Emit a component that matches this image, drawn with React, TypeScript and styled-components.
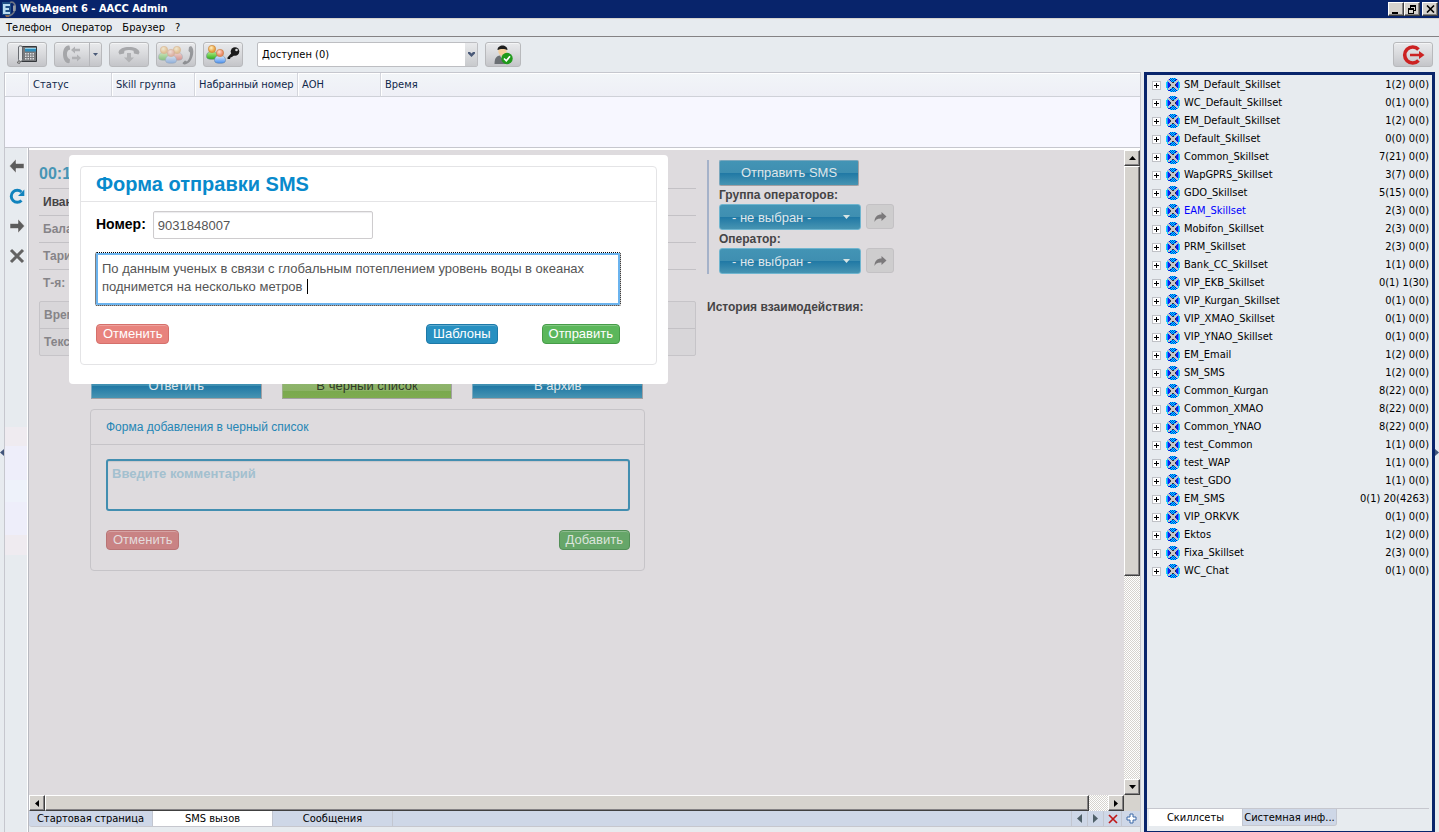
import React from 'react';
import styled, { createGlobalStyle, css } from 'styled-components';

const uiFont = `"DejaVu Sans Condensed", "DejaVu Sans", sans-serif`;
const webFont = `"Liberation Sans", Arial, sans-serif`;

const GlobalStyle = createGlobalStyle`
  *, *::before, *::after { box-sizing: border-box; }
  body { margin: 0; background: #e7ebef; font-family: ${uiFont}; font-size: 11px; color: #000; }
  button, input, select, textarea { font: inherit; margin: 0; }
  button { padding: 0; cursor: pointer; }
  ul, h1, h2, dl, dd { margin: 0; padding: 0; list-style: none; }
  svg { display: block; flex: none; }
`;

const Page = styled.div`
  min-height: 100vh;
  display: flex;
  flex-direction: column;
`;

/* ---- window chrome ---- */

const TitleBar = styled.header`
  display: flex;
  align-items: center;
  height: 18px;
  padding: 0 1px 0 2px;
  gap: 4px;
  background: #08246b;
  color: #fff;
`;

const Title = styled.h1`
  flex: 1;
  font-family: ${uiFont};
  font-size: 11px;
  font-weight: bold;
  line-height: 18px;
`;

const WindowButtons = styled.div`
  display: flex;
`;

const WindowButton = styled.button<{ $gap?: boolean }>`
  display: grid;
  place-items: center;
  width: 16px;
  height: 14px;
  margin-left: ${p => (p.$gap ? 2 : 0)}px;
  background: #d6d3ce;
  border: 1px solid;
  border-color: #fff #404040 #404040 #fff;
  box-shadow: inset -1px -1px 0 #848284;
`;

const MenuBar = styled.nav`
  display: flex;
  align-items: center;
  height: 19px;
  padding: 0 6px;
  gap: 10px;
  border-top: 1px solid #d6d3ce;
  border-bottom: 1px solid #848284;
`;

const MenuButton = styled.button`
  border: 0;
  background: none;
  line-height: 16px;
`;

const Toolbar = styled.div`
  display: flex;
  align-items: center;
  height: 35px;
  padding: 0 6px 0 7px;
  gap: 7px;
`;

const ToolButton = styled.button<{ $width?: number }>`
  display: flex;
  align-items: center;
  justify-content: center;
  width: ${p => p.$width ?? 40}px;
  height: 25px;
  border: 1px solid #b8b9bc;
  border-radius: 3px;
  background: linear-gradient(#e9eaec, #d8d9dc 50%, #c4c5c9);
  box-shadow: inset 0 1px 0 #f4f5f6;
`;

const SplitArrow = styled.span`
  display: grid;
  place-items: center;
  width: 12px;
  height: 23px;
  border-left: 1px solid #b5b6ba;
`;

const SplitMain = styled.span`
  display: grid;
  place-items: center;
  flex: 1;
`;

const StatusBox = styled.div`
  display: flex;
  width: 221px;
  height: 25px;
  margin-left: 7px;
  border: 1px solid #bdbec2;
  border-radius: 2px;
  background: #fff;
  position: relative;
`;

const StatusSelect = styled.select`
  appearance: none;
  flex: 1;
  padding: 0 16px 0 4px;
  border: 0;
  background: none;
`;

const StatusArrow = styled.span`
  position: absolute;
  right: 0;
  top: 0;
  bottom: 0;
  width: 12px;
  display: grid;
  place-items: center;
  background: linear-gradient(#e9eaec, #c8cacd);
  pointer-events: none;
`;

const Spacer = styled.span`
  flex: 1;
`;

/* ---- main frame ---- */

const Main = styled.main`
  flex: 1;
  display: flex;
`;

const Gutter = styled.div`
  display: flex;
  align-items: center;
  width: 4px;
`;

const Work = styled.div`
  flex: 1;
  min-width: 0;
  display: flex;
  flex-direction: column;
  border: solid #c6c7ce;
  border-width: 1px 1px 0 1px;
`;

const CallArea = styled.section`
  height: 75px;
  background: #f7f7ff;
  border-bottom: 1px solid #c6c7ce;
`;

const CallTable = styled.table`
  width: 100%;
  table-layout: fixed;
  border-collapse: separate;
  border-spacing: 0;
`;

const CallHead = styled.th<{ $width?: number }>`
  width: ${p => (p.$width ? `${p.$width}px` : 'auto')};
  height: 24px;
  padding: 0 0 0 4px;
  text-align: left;
  font-weight: normal;
  white-space: nowrap;
  color: #10284a;
  background: linear-gradient(#f2f5f8, #eeeff6);
  border-bottom: 1px solid #cfd1d8;
  border-right: ${p => (p.$width ? '1px solid #d4d6dd' : '0')};
  box-shadow: inset 0 1px 0 #fff, inset 1px 0 0 #fff;
`;

const Browser = styled.section`
  flex: 1;
  display: flex;
`;

const SideBar = styled.nav`
  width: 24px;
  padding: 10px 0 0 4px;
  display: flex;
  flex-direction: column;
  gap: 14px;
  border-right: 1px solid #b9bac1;
  box-shadow: inset -1px 0 0 #fff;
  background: linear-gradient(
    #e7ebef 279px, #efebf0 279px, #efebf0 298px, #eeeefa 298px, #eeeefa 332px,
    #eef2fa 332px, #eef2fa 354px, #eeeefa 354px, #eeeefa 387px,
    #efebf0 387px, #efebf0 407px, #e7ebef 407px
  );
`;

const SideButton = styled.button`
  display: grid;
  place-items: center;
  width: 16px;
  height: 16px;
  border: 0;
  background: none;
`;

const Frame = styled.div`
  flex: 1;
  min-width: 0;
  display: flex;
  flex-direction: column;
  padding-bottom: 5px;
  border-top: 2px solid #fff;
`;

const ViewRow = styled.div`
  flex: 1;
  display: flex;
`;

const Viewport = styled.div`
  position: relative;
  flex: 1;
  min-width: 0;
  display: flex;
  align-items: flex-start;
  gap: 11px;
  padding: 10px;
  background: #dedbde;
  font-family: ${webFont};
  font-size: 12px;
`;

/* ---- scroll bars ---- */

const track = css`
  background: repeating-conic-gradient(#fff 0 25%, #d6d3ce 0 50%) 0 0 / 2px 2px;
`;

const VScroll = styled.div`
  width: 16px;
  display: flex;
  flex-direction: column;
  ${track}
`;

const HScroll = styled.div`
  height: 16px;
  display: flex;
  ${track}
`;

const ScrollCorner = styled.div`
  width: 16px;
  background: #d6d3ce;
`;

const raised = css`
  background: #d6d3ce;
  border: 1px solid;
  border-color: #fff #404040 #404040 #fff;
  box-shadow: inset -1px -1px 0 #848284;
`;

const ScrollButton = styled.button`
  display: grid;
  place-items: center;
  width: 16px;
  height: 16px;
  ${raised}
`;

const VThumb = styled.div`
  height: 410px;
  ${raised}
`;

const HThumb = styled.div`
  flex: 1;
  margin-right: 19px;
  ${raised}
`;

/* ---- bottom tabs ---- */

const TabBar = styled.div`
  display: flex;
  height: 16px;
  background: #ced7e7;
  border-bottom: 1px solid #c6c7ce;
  border-radius: 0 0 0 3px;
`;

const Tab = styled.button<{ $active?: boolean; $width: number }>`
  width: ${p => p.$width}px;
  border: 0;
  border-right: 1px solid #c2c6d0;
  background: ${p => (p.$active ? '#fff' : 'transparent')};
  line-height: 15px;
  white-space: nowrap;
`;

const SystemTab = styled(Tab)`
  background: #ced7e7;
  border-bottom: 1px solid #c6c7ce;
  border-radius: 0 0 3px 0;
`;

const TabTool = styled.button<{ $width?: number }>`
  display: grid;
  place-items: center;
  width: ${p => p.$width ?? 16}px;
  border: 0;
  border-left: 1px solid #c2c6d0;
  background: none;
`;

/* ---- message page ---- */

const InfoColumn = styled.div`
  width: 657px;
  flex: none;
`;

const Timer = styled.div`
  height: 29px;
  border-bottom: 1px solid #c3c1c5;
  color: #4795b5;
  font-size: 16px;
  font-weight: bold;
  line-height: 27px;
`;

const InfoRow = styled.div<{ $strong?: boolean; $last?: boolean }>`
  height: 27px;
  padding-left: 4px;
  border-bottom: ${p => (p.$last ? '0' : '1px solid #c3c1c5')};
  color: ${p => (p.$strong ? '#454446' : '#868488')};
  font-weight: bold;
  line-height: 26px;
`;

const InfoCard = styled.div`
  height: 55px;
  margin-top: 4px;
  border: 1px solid #c6c4c8;
  border-radius: 2px;
  background: #d8d6d9;
`;

const ActionRow = styled.div`
  display: flex;
  gap: 20px;
  margin: 17px 53px 10px 52px;
`;

const glossBlue = 'linear-gradient(#4394b5, #3f8fb1 48%, #2179a5 52%, #4794b2)';
const glossGreen = 'linear-gradient(#94b878, #8bb265 70%, #7aa94e 72%, #7eab50)';

const Gloss = styled.button<{ $green?: boolean }>`
  flex: 1;
  height: 26px;
  border: 1px solid;
  border-color: ${p => (p.$green ? '#9cb088' : '#7aa7bd')} #a3a0a3 #a3a0a3 ${p => (p.$green ? '#9cb088' : '#7aa7bd')};
  background: ${p => (p.$green ? glossGreen : glossBlue)};
  color: ${p => (p.$green ? '#303a28' : '#dfe6ea')};
  font-size: 13px;
  line-height: 24px;
`;

const BlackCard = styled.section`
  margin: 0 51px;
  border: 1px solid #c6c4c8;
  border-radius: 4px;
`;

const BlackTitle = styled.h2`
  height: 35px;
  padding-left: 15px;
  border-bottom: 1px solid #c6c4c8;
  color: #2586b5;
  font-size: 12px;
  font-weight: normal;
  line-height: 34px;
`;

const CardBody = styled.div`
  padding: 14px 14px 20px 15px;
`;

const CommentArea = styled.textarea`
  display: block;
  width: 100%;
  height: 52px;
  padding: 4px;
  border: 2px solid #428eb0;
  border-radius: 3px;
  background: none;
  box-shadow: inset 0 1px 1px #c9c7cb;
  font-size: 13px;
  font-weight: bold;
  line-height: 18px;
  resize: none;
  overflow: hidden;
  outline: none;
  &::placeholder { color: #a3c0cf; opacity: 1; }
`;

const ButtonRow = styled.div`
  display: flex;
  justify-content: space-between;
  margin-top: 19px;
`;

const ButtonPair = styled.div`
  display: flex;
  gap: 44px;
`;

const tones = {
  red: ['#e8837d', '#d5706b', '#fff'],
  blue: ['#2790c1', '#1d79a8', '#fff'],
  green: ['#5bb75b', '#469c48', '#fff'],
  dimRed: ['#c98384', '#b97576', '#e4dcdd'],
  dimGreen: ['#66a669', '#538f57', '#dce4dc'],
};

const SmallButton = styled.button<{ $tone: keyof typeof tones }>`
  height: 20px;
  padding: 0 6px;
  border: 1px solid ${p => tones[p.$tone][1]};
  border-radius: 4px;
  background: ${p => tones[p.$tone][0]};
  box-shadow: inset 0 1px 0 rgba(255, 255, 255, 0.25);
  color: ${p => tones[p.$tone][2]};
  font-size: 13px;
  line-height: 18px;
`;

const OperatorColumn = styled.aside`
  flex: 1;
  min-width: 0;
`;

const Transfer = styled.div`
  padding-left: 10px;
  border-left: 2px solid #a5b2c9;
  color: #454446;
`;

const SendButton = styled(Gloss)`
  display: block;
  width: 140px;
  border-radius: 2px;
`;

const FieldLabel = styled.label`
  display: block;
  font-weight: bold;
  line-height: 18px;
`;

const TransferRow = styled.div`
  display: flex;
  gap: 5px;
`;

const OperatorBox = styled.div`
  position: relative;
  display: flex;
  width: 142px;
  height: 26px;
  border: 1px solid #6fb5cf;
  border-radius: 3px;
  background: ${glossBlue};
`;

const OperatorSelect = styled.select`
  appearance: none;
  flex: 1;
  padding: 0 12px;
  border: 0;
  background: none;
  color: #dfe6ea;
  font-size: 13px;
`;

const OperatorArrow = styled.span`
  position: absolute;
  right: 10px;
  top: 10px;
  pointer-events: none;
`;

const ForwardButton = styled.button`
  display: grid;
  place-items: center;
  width: 28px;
  height: 25px;
  border: 1px solid #c3c1c4;
  border-radius: 3px;
  background: #cecdce;
`;

const History = styled.h2`
  margin-top: 24px;
  color: #454446;
  font-size: 12px;
  line-height: 18px;
`;

/* ---- send dialog ---- */

const Dialog = styled.section`
  position: absolute;
  left: 40px;
  top: 5px;
  width: 599px;
  padding: 11px;
  padding-bottom: 19px;
  border-radius: 4px;
  background: #fff;
`;

const DialogCard = styled.form`
  border: 1px solid #e4e4e6;
  border-radius: 4px;
`;

const DialogTitle = styled.h2`
  height: 35px;
  padding-left: 15px;
  border-bottom: 1px solid #e4e4e6;
  color: #088acc;
  font-size: 20px;
  line-height: 34px;
`;

const DialogBody = styled.div`
  padding: 9px 36px 20px 15px;
`;

const NumberRow = styled.div`
  display: flex;
  gap: 7px;
  margin-bottom: 14px;
`;

const NumberLabel = styled.label`
  font-size: 14px;
  font-weight: bold;
  line-height: 26px;
`;

const NumberInput = styled.input`
  width: 220px;
  height: 28px;
  padding: 0 4px;
  border: 1px solid #ceccce;
  border-radius: 2px;
  box-shadow: inset 0 1px 1px #ececee;
  color: #555;
  font-size: 13px;
  outline: none;
`;

const MessageBox = styled.div`
  position: relative;
`;

const MessageArea = styled.textarea`
  display: block;
  width: 100%;
  height: 52px;
  padding: 5px 4px;
  border: 2px solid #6bb3ee;
  border-radius: 1px;
  outline: 1px dotted #000;
  color: #555;
  font-size: 13px;
  line-height: 18px;
  resize: none;
  overflow: hidden;
`;

const Caret = styled.span`
  position: absolute;
  left: 211px;
  top: 26px;
  width: 1px;
  height: 15px;
  background: #000;
`;

/* ---- skillset panel ---- */

const SkillPanel = styled.aside`
  width: 291px;
  margin-left: 3px;
  display: flex;
  flex-direction: column;
  border: 3px solid #08246b;
  border-bottom-width: 1px;
`;

const SkillTree = styled.ul`
  flex: 1;
  padding: 0 3px 0 5px;
`;

const SkillRow = styled.li<{ $selected?: boolean }>`
  display: flex;
  align-items: center;
  height: 18px;
  color: ${p => (p.$selected ? '#0000ff' : '#000')};

  svg { margin-top: 2px; }
`;

const Expand = styled.button`
  display: grid;
  place-items: center;
  width: 9px;
  height: 9px;
  margin: 2px 5px 0 0;
  border: 1px solid #bfc1c6;
  background: #fff;

  svg { margin: 0; }
`;

const SkillName = styled.span`
  flex: 1;
  margin-left: 4px;
`;

const SkillCount = styled.span`
  color: #000;
`;

const SkillTabs = styled.div`
  display: flex;
  height: 23px;
  margin-right: 3px;
  padding: 0 0 5px 2px;
  border-top: 1px solid #c6c7ce;
`;

/* ---- icons ---- */

const Arrow = ({ dir, color = '#000', size = 4 }: { dir: 'up' | 'down' | 'left' | 'right'; color?: string; size?: number }) => {
  const w = size * 2 - 1;
  const shapes = {
    up: [w, size, `M0 ${size}H${w}L${size - 0.5} 0Z`],
    down: [w, size, `M0 0H${w}L${size - 0.5} ${size}Z`],
    left: [size, w, `M${size} 0V${w}L0 ${size - 0.5}Z`],
    right: [size, w, `M0 0V${w}L${size} ${size - 0.5}Z`],
  } as const;
  const [sw, sh, d] = shapes[dir];
  return <svg width={sw} height={sh}><path d={d} fill={color} /></svg>;
};

const DefsSvg = styled.svg`
  position: absolute;
`;

const SharedDefs = () => (
  <DefsSvg width="0" height="0" aria-hidden="true">
    <defs>
      <pattern id="checker" width="2" height="2" patternUnits="userSpaceOnUse">
        <rect width="2" height="2" fill="#00e4ff" />
        <rect width="1" height="1" fill="#0038e0" />
        <rect x="1" y="1" width="1" height="1" fill="#0038e0" />
      </pattern>
      <radialGradient id="face" cx="40%" cy="35%"><stop offset="0" stopColor="#fff0c0" /><stop offset="1" stopColor="#e8a040" /></radialGradient>
      <radialGradient id="facePink" cx="40%" cy="35%"><stop offset="0" stopColor="#ffe0d0" /><stop offset="1" stopColor="#e88868" /></radialGradient>
      <linearGradient id="bodyGreen" x2="0" y2="1"><stop offset="0" stopColor="#b8f090" /><stop offset="1" stopColor="#2fae18" /></linearGradient>
      <linearGradient id="bodyBlue" x2="0" y2="1"><stop offset="0" stopColor="#e0eeff" /><stop offset="1" stopColor="#4a90ee" /></linearGradient>
      <linearGradient id="bodyRed" x2="0" y2="1"><stop offset="0" stopColor="#ffc8c0" /><stop offset="1" stopColor="#e04838" /></linearGradient>
    </defs>
  </DefsSvg>
);

const SkillIcon = () => (
  <svg width="14" height="14" shapeRendering="crispEdges">
    <path d="M4 0H10V1H12L8 6H6L2 1H4ZM4 14H10V13H12L8 8H6L2 13H4Z" fill="url(#checker)" />
    <path d="M0 4V10H1V12L6 8V6L1 2V4Z" fill="#00dcff" />
    <path d="M14 4V10H13V12L8 8V6L13 2V4Z" fill="#00dcff" />
    <path d="M2 4V10H3L6 8V6L3 4ZM12 4V10H11L8 8V6L11 4Z" fill="#0a20f0" />
    <path d="M1 4V10H2V4ZM13 4V10H12V4Z" fill="#3080ff" />
    <path d="M3 1H4V2H5V4H4V3H3ZM10 1H11V3H10V4H9V2H10ZM3 13H4V12H5V10H4V11H3ZM11 13H10V12H9V10H10V11H11Z" fill="#0010d0" />
    <path d="M2 2L12 12M12 2L2 12" stroke="#bcc3d2" strokeWidth="1.600" fill="none" />
    <rect x="5" y="5" width="4" height="4" fill="#c8c8c8" />
    <path d="M6 4H8V5H6ZM6 9H8V10H6ZM4 6H5V8H4ZM9 6H10V8H9Z" fill="#303040" />
  </svg>
);

const PlusSign = () => (
  <svg width="5" height="5" shapeRendering="crispEdges"><path d="M2 0H3V2H5V3H3V5H2V3H0V2H2Z" fill="#000" /></svg>
);

const LogoIcon = () => (
  <svg width="14" height="16" viewBox="0 0 14 16">
    <rect x="0" y="1" width="9" height="13" fill="#1f4f86" />
    <path d="M1 3H8V5H3.500V7H7V9H3.500V11H8V13H1Z" fill="#b9dcf2" />
    <path d="M8 1.500C12 0 14 4 13 8.500C12 12 10 15 5 15" stroke="#6d7484" strokeWidth="1.600" fill="none" />
    <path d="M11 4.500H13.500V10H11Z" fill="#9299a5" />
    <path d="M3 14H7V16H4Z" fill="#8b6b58" />
  </svg>
);

const PhoneIcon = () => (
  <svg width="21" height="19" viewBox="0 0 21 19">
    <path d="M4.500 1.500H19.500V16.500H4.500Z" fill="#77797c" stroke="#35383c" />
    <path d="M8 3H19V6.500H8Z" fill="#2f8fbe" />
    <path d="M8 3H19V4H8Z" fill="#8fd0ea" />
    {[8, 10.5, 13].map(y => [8, 10.5, 13, 15.5].map(x => <rect key={`${x}-${y}`} x={x} y={y} width="1.500" height="1.500" fill="#dcdee0" />))}
    <path d="M1.500 2C1.500 0.500 5.500 0.500 5.500 2V14.500C5.500 17 1.500 17 1.500 14.500Z" fill="#e2e4e6" stroke="#5a5e63" strokeWidth="0.900" />
    <path d="M0.500 18C0 16.500 1.500 15.500 3.500 16.500L2.500 18.500Z" stroke="#505050" fill="#bbb" strokeWidth="0.700" />
  </svg>
);

const TransferIcon = () => (
  <svg width="20" height="19" viewBox="0 0 20 19">
    <path d="M7.500 0.800C4 -0.500 1 4 1 9C1 15 4 19 7.500 18L8 14.500L6 13C4.500 11 4.500 7.500 6 5.500L8.200 4.500Z" fill="#a5a6a9" />
    <path d="M9 5L13 1.500V3.800H18V6.200H13V8.500Z" fill="#b0b1b4" />
    <path d="M19 13L15 9.500V11.800H10V14.200H15V16.500Z" fill="#b0b1b4" />
  </svg>
);

const HangUpIcon = () => (
  <svg width="22" height="17" viewBox="0 0 22 17">
    <path d="M0.500 6.500C1 -0.800 21 -0.800 21.500 6.500L20.500 8.500L16 7.500L15.500 4.800C12.500 3.800 9.500 3.800 6.500 4.800L6 7.500L1.500 8.500Z" fill="#a7a8ab" />
    <path d="M9 7H13V11.500H16L11 16.500L6 11.500H9Z" fill="#b2b3b6" />
  </svg>
);

const Person = ({ x, y, body, face }: { x: number; y: number; body: string; face: string }) => (
  <g transform={`translate(${x} ${y})`}>
    <path d="M0.500 11.500C0.500 7.500 3 6.500 6 6.500C9 6.500 11.500 7.500 11.500 11.500C11.500 13.800 9 14.300 6 14.300C3 14.300 0.500 13.800 0.500 11.500Z" fill={`url(#${body})`} stroke="#5d7896" strokeWidth="0.500" />
    <circle cx="6" cy="4" r="3.700" fill={`url(#${face})`} stroke="#c07a35" strokeWidth="0.500" />
  </g>
);

const ConferenceIcon = () => (
  <svg width="36" height="20" viewBox="0 0 36 20" opacity="0.450">
    <Person x={0} y={1} body="bodyGreen" face="face" />
    <Person x={13} y={1} body="bodyRed" face="face" />
    <Person x={7} y={4} body="bodyBlue" face="facePink" />
    <path d="M33 1C36.500 3 36 12 31.500 17C28 20 25 20 24.500 18L27 15.500L29 16.500C31.500 14.500 32.300 10 32 7.500L30.500 6L31 2Z" fill="#44474b" />
  </svg>
);

const LoginIcon = () => (
  <svg width="34" height="20" viewBox="0 0 34 20">
    <Person x={0} y={0} body="bodyGreen" face="face" />
    <Person x={8} y={4} body="bodyBlue" face="facePink" />
    <circle cx="29" cy="6.500" r="4.300" fill="#1b1b1b" />
    <circle cx="30.500" cy="5" r="1.300" fill="#d8d9dc" />
    <path d="M26 7.500L21.500 12.500V14H24L24.500 12.500L26 12L28.500 10Z" fill="#1b1b1b" />
  </svg>
);

const ReadyIcon = () => (
  <svg width="19" height="20" viewBox="0 0 19 20">
    <path d="M0.500 19C0.500 12 3 10.500 8 10.500C12 10.500 14 12 14.500 19Z" fill="#6b6f74" />
    <path d="M6 10.500L8 14L10 10.500Z" fill="#e6e6e6" />
    <ellipse cx="8.500" cy="6" rx="4.200" ry="5" fill="#f5cf9c" />
    <path d="M3.500 5C3.500 -1 13.500 -1 13.500 5C11 3.500 6 3.500 3.500 5Z" fill="#1d1d1d" />
    <circle cx="13" cy="13.500" r="5.700" fill="#1f9a1b" />
    <path d="M10 13.500L12.300 15.800L16 11.300" stroke="#fff" strokeWidth="1.700" fill="none" />
  </svg>
);

const ExitIcon = () => (
  <svg width="24" height="20" viewBox="0 0 24 20">
    <path d="M17.500 4.500A8 8 0 1 0 17.500 15.500" stroke="#cc2222" strokeWidth="3.600" fill="none" />
    <path d="M9 8.700H18V6L23.500 10L18 14V11.300H9Z" fill="#cc2222" />
  </svg>
);

const BackIcon = () => (
  <svg width="16" height="16" viewBox="0 0 16 16"><path d="M0.500 8L7 1V5.500H15V10.500H7V15Z" fill="#5c5c5c" stroke="#f6f7f8" strokeWidth="0.500" /></svg>
);
const ForwardIcon = () => (
  <svg width="16" height="16" viewBox="0 0 16 16"><path d="M15.500 8L9 1V5.500H1V10.500H9V15Z" fill="#5c5c5c" stroke="#f6f7f8" strokeWidth="0.500" /></svg>
);
const ReloadIcon = () => (
  <svg width="16" height="16" viewBox="0 0 16 16">
    <path d="M12.500 12.500A6 6 0 1 1 12.500 4" stroke="#1183bd" strokeWidth="3" fill="none" />
    <path d="M15.300 1.500V8H9Z" fill="#1183bd" />
  </svg>
);
const StopIcon = () => (
  <svg width="16" height="16" viewBox="0 0 16 16"><path d="M2 2L14 14M14 2L2 14" stroke="#636363" strokeWidth="3" /></svg>
);

const ShareIcon = () => (
  <svg width="13" height="10" viewBox="0 0 13 10"><path d="M12.500 4.500L7.500 0V2.500C3 2.500 0.500 5 0.500 10C2 7 4 6.500 7.500 6.500V9Z" fill="#7b797b" /></svg>
);

/* ---- data ---- */

const skills: [string, string][] = [
  ['SM_Default_Skillset', '1(2) 0(0)'],
  ['WC_Default_Skillset', '0(1) 0(0)'],
  ['EM_Default_Skillset', '1(2) 0(0)'],
  ['Default_Skillset', '0(0) 0(0)'],
  ['Common_Skillset', '7(21) 0(0)'],
  ['WapGPRS_Skillset', '3(7) 0(0)'],
  ['GDO_Skillset', '5(15) 0(0)'],
  ['EAM_Skillset', '2(3) 0(0)'],
  ['Mobifon_Skillset', '2(3) 0(0)'],
  ['PRM_Skillset', '2(3) 0(0)'],
  ['Bank_CC_Skillset', '1(1) 0(0)'],
  ['VIP_EKB_Skillset', '0(1) 1(30)'],
  ['VIP_Kurgan_Skillset', '0(1) 0(0)'],
  ['VIP_XMAO_Skillset', '0(1) 0(0)'],
  ['VIP_YNAO_Skillset', '0(1) 0(0)'],
  ['EM_Email', '1(2) 0(0)'],
  ['SM_SMS', '1(2) 0(0)'],
  ['Common_Kurgan', '8(22) 0(0)'],
  ['Common_XMAO', '8(22) 0(0)'],
  ['Common_YNAO', '8(22) 0(0)'],
  ['test_Common', '1(1) 0(0)'],
  ['test_WAP', '1(1) 0(0)'],
  ['test_GDO', '1(1) 0(0)'],
  ['EM_SMS', '0(1) 20(4263)'],
  ['VIP_ORKVK', '0(1) 0(0)'],
  ['Ektos', '1(2) 0(0)'],
  ['Fixa_Skillset', '2(3) 0(0)'],
  ['WC_Chat', '0(1) 0(0)'],
];

const callColumns: [string, number?][] = [
  ['', 24],
  ['Статус', 83],
  ['Skill группа', 83],
  ['Набранный номер', 103],
  ['АОН', 83],
  ['Время'],
];

const message =
  'По данным ученых в связи с глобальным потеплением уровень воды в океанах поднимется на несколько метров ';

const OperatorPicker = ({ id, label }: { id: string; label: string }) => (
  <>
    <FieldLabel htmlFor={id}>{label}</FieldLabel>
    <TransferRow>
      <OperatorBox>
        <OperatorSelect id={id}><option>- не выбран -</option></OperatorSelect>
        <OperatorArrow><Arrow dir="down" color="#d6e4e4" size={4} /></OperatorArrow>
      </OperatorBox>
      <ForwardButton type="button" aria-label="Перевести"><ShareIcon /></ForwardButton>
    </TransferRow>
  </>
);

const SendDialog = () => (
  <Dialog role="dialog" aria-labelledby="send-title">
    <DialogCard onSubmit={e => e.preventDefault()}>
      <DialogTitle id="send-title">Форма отправки SMS</DialogTitle>
      <DialogBody>
        <NumberRow>
          <NumberLabel htmlFor="number">Номер:</NumberLabel>
          <NumberInput id="number" defaultValue="9031848007" />
        </NumberRow>
        <MessageBox>
          <MessageArea aria-label="Текст сообщения" defaultValue={message} spellCheck={false} />
          <Caret />
        </MessageBox>
        <ButtonRow>
          <SmallButton type="button" $tone="red">Отменить</SmallButton>
          <ButtonPair>
            <SmallButton type="button" $tone="blue">Шаблоны</SmallButton>
            <SmallButton type="submit" $tone="green">Отправить</SmallButton>
          </ButtonPair>
        </ButtonRow>
      </DialogBody>
    </DialogCard>
  </Dialog>
);

export default function App() {
  return (
    <Page>
      <GlobalStyle />
      <SharedDefs />
      <TitleBar>
        <LogoIcon />
        <Title>WebAgent 6 - AACC Admin</Title>
        <WindowButtons>
          <WindowButton aria-label="Свернуть">
            <svg width="10" height="9" shapeRendering="crispEdges"><path d="M1 7H7V9H1Z" /></svg>
          </WindowButton>
          <WindowButton aria-label="Восстановить">
            <svg width="10" height="9" shapeRendering="crispEdges">
              <path d="M3 0H9V6H7V5H8V2H4V3H3ZM1 3H7V9H1ZM2 5V8H6V5Z" fillRule="evenodd" />
            </svg>
          </WindowButton>
          <WindowButton $gap aria-label="Закрыть">
            <svg width="9" height="8"><path d="M1 0.500L8 7.500M8 0.500L1 7.500" stroke="#000" strokeWidth="1.600" /></svg>
          </WindowButton>
        </WindowButtons>
      </TitleBar>
      <MenuBar>
        <MenuButton>Телефон</MenuButton>
        <MenuButton>Оператор</MenuButton>
        <MenuButton>Браузер</MenuButton>
        <MenuButton>?</MenuButton>
      </MenuBar>
      <Toolbar>
        <ToolButton aria-label="Телефон"><PhoneIcon /></ToolButton>
        <ToolButton $width={48} aria-label="Перевод">
          <SplitMain><TransferIcon /></SplitMain>
          <SplitArrow><Arrow dir="down" color="#4a5a78" size={3} /></SplitArrow>
        </ToolButton>
        <ToolButton aria-label="Завершить"><HangUpIcon /></ToolButton>
        <ToolButton aria-label="Конференция"><ConferenceIcon /></ToolButton>
        <ToolButton aria-label="Вход"><LoginIcon /></ToolButton>
        <StatusBox>
          <StatusSelect aria-label="Статус"><option>Доступен (0)</option></StatusSelect>
          <StatusArrow>
            <svg width="7" height="5"><path d="M0 0H2L3.500 1.500L5 0H7V1.500L3.500 5L0 1.500Z" fill="#4a5a78" /></svg>
          </StatusArrow>
        </StatusBox>
        <ToolButton $width={36} aria-label="Готов"><ReadyIcon /></ToolButton>
        <Spacer />
        <ToolButton aria-label="Выход"><ExitIcon /></ToolButton>
      </Toolbar>
      <Main>
        <Gutter><Arrow dir="left" color="#42557b" size={4} /></Gutter>
        <Work>
          <CallArea>
            <CallTable>
              <thead>
                <tr>{callColumns.map(([name, width]) => <CallHead key={name} $width={width}>{name}</CallHead>)}</tr>
              </thead>
            </CallTable>
          </CallArea>
          <Browser>
            <SideBar>
              <SideButton aria-label="Назад"><BackIcon /></SideButton>
              <SideButton aria-label="Обновить"><ReloadIcon /></SideButton>
              <SideButton aria-label="Вперёд"><ForwardIcon /></SideButton>
              <SideButton aria-label="Стоп"><StopIcon /></SideButton>
            </SideBar>
            <Frame>
              <ViewRow>
                <Viewport>
                  <InfoColumn>
                    <Timer>00:1</Timer>
                    <InfoRow $strong>Иван</InfoRow>
                    <InfoRow>Бала</InfoRow>
                    <InfoRow>Тари</InfoRow>
                    <InfoRow $last>Т-я:</InfoRow>
                    <InfoCard>
                      <InfoRow>Врем</InfoRow>
                      <InfoRow $last>Текс</InfoRow>
                    </InfoCard>
                    <ActionRow>
                      <Gloss>Ответить</Gloss>
                      <Gloss $green>В черный список</Gloss>
                      <Gloss>В архив</Gloss>
                    </ActionRow>
                    <BlackCard>
                      <BlackTitle>Форма добавления в черный список</BlackTitle>
                      <CardBody>
                        <CommentArea aria-label="Комментарий" placeholder="Введите комментарий" />
                        <ButtonRow>
                          <SmallButton $tone="dimRed">Отменить</SmallButton>
                          <SmallButton $tone="dimGreen">Добавить</SmallButton>
                        </ButtonRow>
                      </CardBody>
                    </BlackCard>
                  </InfoColumn>
                  <OperatorColumn>
                    <Transfer>
                      <SendButton>Отправить SMS</SendButton>
                      <OperatorPicker id="group" label="Группа операторов:" />
                      <OperatorPicker id="operator" label="Оператор:" />
                    </Transfer>
                    <History>История взаимодействия:</History>
                  </OperatorColumn>
                  <SendDialog />
                </Viewport>
                <VScroll>
                  <ScrollButton aria-label="Вверх"><Arrow dir="up" /></ScrollButton>
                  <VThumb />
                  <Spacer />
                  <ScrollButton aria-label="Вниз"><Arrow dir="down" /></ScrollButton>
                </VScroll>
              </ViewRow>
              <HScroll>
                <ScrollButton aria-label="Влево"><Arrow dir="left" /></ScrollButton>
                <HThumb />
                <ScrollButton aria-label="Вправо"><Arrow dir="right" /></ScrollButton>
                <ScrollCorner />
              </HScroll>
              <TabBar>
                <Tab $width={124}>Стартовая страница</Tab>
                <Tab $active $width={120}>SMS вызов</Tab>
                <Tab $width={120}>Сообщения</Tab>
                <Spacer />
                <TabTool aria-label="Предыдущая"><Arrow dir="left" color="#4f6069" size={5} /></TabTool>
                <TabTool aria-label="Следующая"><Arrow dir="right" color="#4f6069" size={5} /></TabTool>
                <TabTool $width={18} aria-label="Закрыть вкладку">
                  <svg width="10" height="10"><path d="M1 1L9 9M9 1L1 9" stroke="#c01818" strokeWidth="1.700" /></svg>
                </TabTool>
                <TabTool $width={19} aria-label="Новая вкладка">
                  <svg width="11" height="11"><path d="M4 1H7V4H10V7H7V10H4V7H1V4H4Z" fill="#fff" stroke="#3a69a8" /></svg>
                </TabTool>
              </TabBar>
            </Frame>
          </Browser>
        </Work>
        <SkillPanel>
          <SkillTree>
            {skills.map(([name, count]) => (
              <SkillRow key={name} $selected={name === 'EAM_Skillset'}>
                <Expand aria-label={`Развернуть ${name}`}><PlusSign /></Expand>
                <SkillIcon />
                <SkillName>{name}</SkillName>
                <SkillCount>{count}</SkillCount>
              </SkillRow>
            ))}
          </SkillTree>
          <SkillTabs>
            <Tab $active $width={94}>Скиллсеты</Tab>
            <SystemTab $width={94}>Системная инф...</SystemTab>
          </SkillTabs>
        </SkillPanel>
        <Gutter><Arrow dir="right" color="#42557b" size={4} /></Gutter>
      </Main>
    </Page>
  );
}
